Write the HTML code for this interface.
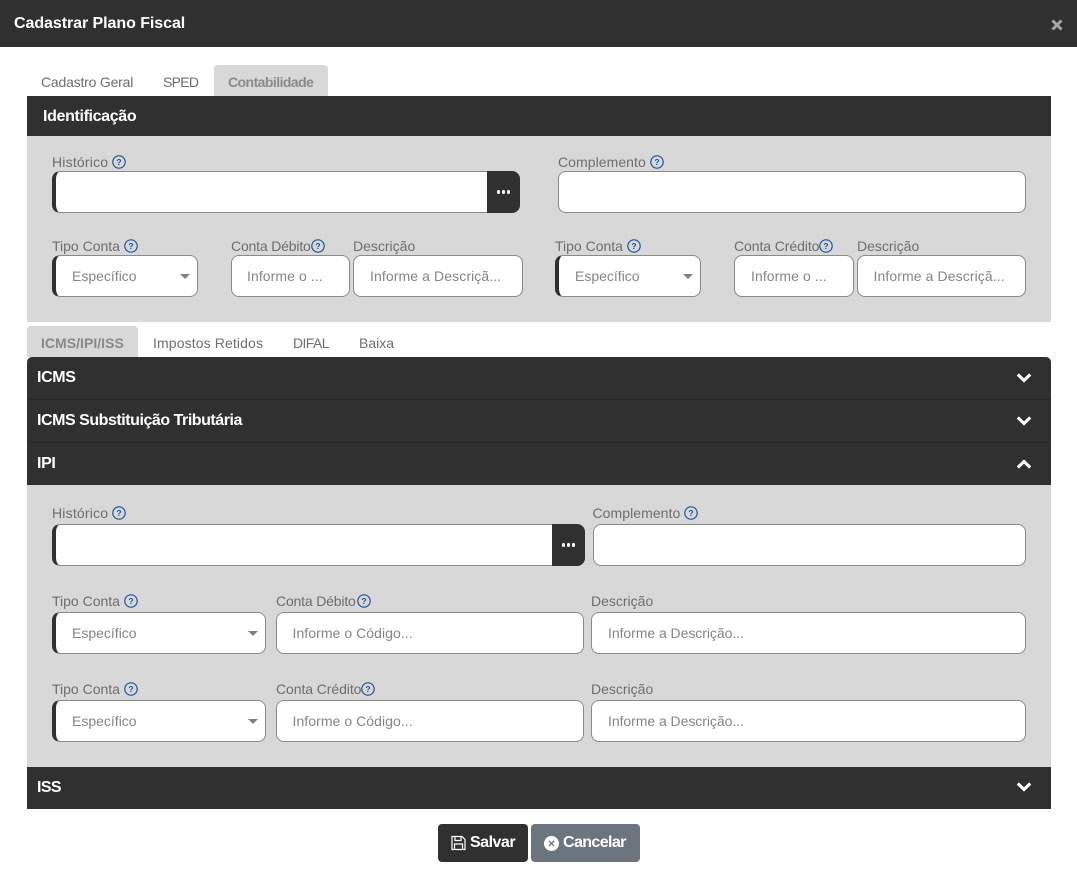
<!DOCTYPE html>
<html lang="pt-BR"><head><meta charset="utf-8"><title>Cadastrar Plano Fiscal</title>
<style>
html,body{margin:0;padding:0;background:#fff;}
body{width:1077px;height:885px;position:relative;overflow:hidden;font-family:"Liberation Sans",Arial,sans-serif;font-size:14px;color:#6b6b6b;}
div,span,svg{position:absolute;box-sizing:border-box;}
.t{white-space:nowrap;line-height:16px;}
.bar{background:#303030;}
.grey{background:#d8d8d8;}
.w{color:#fff;font-weight:bold;font-size:16px;white-space:nowrap;line-height:20px;letter-spacing:-.35px;}
.l{white-space:nowrap;line-height:16px;color:#6e6e6e;font-size:14px;}
.i{background:#fff;border:1px solid #8a8a8a;border-radius:8px;height:42px;}
.dk{border-left:4px solid #303030;}
.ph{white-space:nowrap;line-height:16px;color:#858585;font-size:14px;}
.tab{white-space:nowrap;line-height:16px;color:#6e6e6e;font-size:14px;}
.act{background:#d8d8d8;border-radius:4px 4px 0 0;}
.atx{white-space:nowrap;line-height:16px;color:#8a8a8a;font-size:14px;font-weight:bold;}
.car{width:0;height:0;border-left:5.5px solid transparent;border-right:5.5px solid transparent;border-top:5px solid #7f7f7f;}
.btn3{background:#303030;height:42px;width:33px;border-radius:0 8px 8px 0;}
.dot{width:3.6px;height:3.6px;border-radius:50%;background:#fff;top:19px;}
.sep{height:1px;background:#262626;left:27px;width:1024px;}
.hi{letter-spacing:.2px}.co{letter-spacing:.06px}.cd{letter-spacing:-.17px}.cc{letter-spacing:-.08px}
.p1{letter-spacing:.08px}.p2{letter-spacing:.1px}.p3{letter-spacing:.06px}.p4{letter-spacing:-.05px}
</style></head><body>

<div class="bar" style="left:0;top:0;width:1077px;height:47px"></div>
<div class="w" style="left:14px;top:14px;letter-spacing:-.06px">Cadastrar Plano Fiscal</div>
<svg style="left:1051px;top:19px" width="12" height="12" viewBox="0 0 12 12"><path d="M1.5 1.5L10.5 10.5M10.5 1.5L1.5 10.5" stroke="#a6a6a6" stroke-width="3"/></svg>

<div class="tab" style="left:41px;top:74px;letter-spacing:-.2px">Cadastro Geral</div>
<div class="tab" style="left:163px;top:74px;letter-spacing:-.7px">SPED</div>
<div class="act" style="left:214px;top:65px;width:114px;height:31px"></div>
<div class="atx" style="left:228px;top:74px;letter-spacing:-.55px">Contabilidade</div>

<div class="bar" style="left:27px;top:96px;width:1024px;height:40px"></div>
<div class="w" style="left:43px;top:107px">Identificação</div>
<div class="grey" style="left:27px;top:136px;width:1024px;height:186px"></div>

<div class="l hi" style="left:52px;top:154px">Histórico</div>
<svg style="left:112px;top:155px" width="14" height="14" viewBox="0 0 14 14"><circle cx="7" cy="7" r="6.2" fill="none" stroke="#1d5398" stroke-width="1.2"/><text x="7" y="10" text-anchor="middle" font-family="Liberation Sans" font-weight="bold" font-size="8.5" fill="#1d5398">?</text></svg>
<div class="i dk" style="left:52px;top:171px;width:468px"></div>
<div class="btn3" style="left:487px;top:171px"><span class="dot" style="left:9.5px"></span><span class="dot" style="left:14.5px"></span><span class="dot" style="left:19.5px"></span></div>

<div class="l co" style="left:558px;top:154px">Complemento</div>
<svg style="left:650px;top:155px" width="14" height="14" viewBox="0 0 14 14"><circle cx="7" cy="7" r="6.2" fill="none" stroke="#1d5398" stroke-width="1.2"/><text x="7" y="10" text-anchor="middle" font-family="Liberation Sans" font-weight="bold" font-size="8.5" fill="#1d5398">?</text></svg>
<div class="i" style="left:558px;top:171px;width:468px"></div>

<div class="l" style="left:52px;top:238px">Tipo Conta</div>
<svg style="left:124px;top:239px" width="14" height="14" viewBox="0 0 14 14"><circle cx="7" cy="7" r="6.2" fill="none" stroke="#1d5398" stroke-width="1.2"/><text x="7" y="10" text-anchor="middle" font-family="Liberation Sans" font-weight="bold" font-size="8.5" fill="#1d5398">?</text></svg>
<div class="i dk" style="left:52px;top:255px;width:146px"></div>
<div class="ph" style="left:72px;top:268px">Específico</div>
<div class="car" style="left:180px;top:274px"></div>

<div class="l cd" style="left:231px;top:238px">Conta Débito</div>
<svg style="left:311px;top:239px" width="14" height="14" viewBox="0 0 14 14"><circle cx="7" cy="7" r="6.2" fill="none" stroke="#1d5398" stroke-width="1.2"/><text x="7" y="10" text-anchor="middle" font-family="Liberation Sans" font-weight="bold" font-size="8.5" fill="#1d5398">?</text></svg>
<div class="i" style="left:231px;top:255px;width:119px"></div>
<div class="ph p1" style="left:247px;top:268px">Informe o ...</div>

<div class="l" style="left:353px;top:238px">Descrição</div>
<div class="i" style="left:353px;top:255px;width:170px"></div>
<div class="ph p2" style="left:370px;top:268px">Informe a Descriçã...</div>

<div class="l" style="left:555px;top:238px">Tipo Conta</div>
<svg style="left:627px;top:239px" width="14" height="14" viewBox="0 0 14 14"><circle cx="7" cy="7" r="6.2" fill="none" stroke="#1d5398" stroke-width="1.2"/><text x="7" y="10" text-anchor="middle" font-family="Liberation Sans" font-weight="bold" font-size="8.5" fill="#1d5398">?</text></svg>
<div class="i dk" style="left:555px;top:255px;width:146px"></div>
<div class="ph" style="left:575px;top:268px">Específico</div>
<div class="car" style="left:683px;top:274px"></div>

<div class="l cc" style="left:734px;top:238px">Conta Crédito</div>
<svg style="left:819px;top:239px" width="14" height="14" viewBox="0 0 14 14"><circle cx="7" cy="7" r="6.2" fill="none" stroke="#1d5398" stroke-width="1.2"/><text x="7" y="10" text-anchor="middle" font-family="Liberation Sans" font-weight="bold" font-size="8.5" fill="#1d5398">?</text></svg>
<div class="i" style="left:734px;top:255px;width:120px"></div>
<div class="ph p1" style="left:751px;top:268px">Informe o ...</div>

<div class="l" style="left:857px;top:238px">Descrição</div>
<div class="i" style="left:857px;top:255px;width:169px"></div>
<div class="ph p2" style="left:873.5px;top:268px">Informe a Descriçã...</div>

<div class="act" style="left:27px;top:326px;width:111px;height:31px"></div>
<div class="atx" style="left:41px;top:335px;letter-spacing:.03px">ICMS/IPI/ISS</div>
<div class="tab" style="left:153px;top:335px;letter-spacing:.12px">Impostos Retidos</div>
<div class="tab" style="left:293px;top:335px;letter-spacing:-.6px">DIFAL</div>
<div class="tab" style="left:359px;top:335px">Baixa</div>

<div class="bar" style="left:27px;top:357px;width:1024px;height:128px;border-radius:5px 5px 0 0"></div>
<div class="sep" style="top:399px"></div>
<div class="sep" style="top:442px"></div>
<div class="w" style="left:37px;top:368px">ICMS</div>
<div class="w" style="left:37px;top:411px;letter-spacing:-.46px">ICMS Substituição Tributária</div>
<div class="w" style="left:37px;top:454px">IPI</div>
<svg style="left:1016px;top:372px" width="16" height="11" viewBox="0 0 16 11"><path d="M1.8 2.5L8 8.5L14.2 2.5" fill="none" stroke="#fff" stroke-width="3"/></svg>
<svg style="left:1016px;top:415px" width="16" height="11" viewBox="0 0 16 11"><path d="M1.8 2.5L8 8.5L14.2 2.5" fill="none" stroke="#fff" stroke-width="3"/></svg>
<svg style="left:1016px;top:459px" width="16" height="11" viewBox="0 0 16 11"><path d="M1.8 8.5L8 2.5L14.2 8.5" fill="none" stroke="#fff" stroke-width="3"/></svg>

<div class="grey" style="left:27px;top:485px;width:1024px;height:282px"></div>

<div class="l hi" style="left:52px;top:505px">Histórico</div>
<svg style="left:112px;top:506px" width="14" height="14" viewBox="0 0 14 14"><circle cx="7" cy="7" r="6.2" fill="none" stroke="#1d5398" stroke-width="1.2"/><text x="7" y="10" text-anchor="middle" font-family="Liberation Sans" font-weight="bold" font-size="8.5" fill="#1d5398">?</text></svg>
<div class="i dk" style="left:52px;top:524px;width:533px"></div>
<div class="btn3" style="left:552px;top:524px"><span class="dot" style="left:9.5px"></span><span class="dot" style="left:14.5px"></span><span class="dot" style="left:19.5px"></span></div>

<div class="l co" style="left:592.5px;top:505px">Complemento</div>
<svg style="left:684px;top:506px" width="14" height="14" viewBox="0 0 14 14"><circle cx="7" cy="7" r="6.2" fill="none" stroke="#1d5398" stroke-width="1.2"/><text x="7" y="10" text-anchor="middle" font-family="Liberation Sans" font-weight="bold" font-size="8.5" fill="#1d5398">?</text></svg>
<div class="i" style="left:593px;top:524px;width:433px"></div>

<div class="l" style="left:52px;top:593px">Tipo Conta</div>
<svg style="left:124px;top:594px" width="14" height="14" viewBox="0 0 14 14"><circle cx="7" cy="7" r="6.2" fill="none" stroke="#1d5398" stroke-width="1.2"/><text x="7" y="10" text-anchor="middle" font-family="Liberation Sans" font-weight="bold" font-size="8.5" fill="#1d5398">?</text></svg>
<div class="i dk" style="left:52px;top:612px;width:214px"></div>
<div class="ph" style="left:72px;top:625px">Específico</div>
<div class="car" style="left:248px;top:631px"></div>

<div class="l cd" style="left:276px;top:593px">Conta Débito</div>
<svg style="left:357px;top:594px" width="14" height="14" viewBox="0 0 14 14"><circle cx="7" cy="7" r="6.2" fill="none" stroke="#1d5398" stroke-width="1.2"/><text x="7" y="10" text-anchor="middle" font-family="Liberation Sans" font-weight="bold" font-size="8.5" fill="#1d5398">?</text></svg>
<div class="i" style="left:276px;top:612px;width:308px"></div>
<div class="ph p3" style="left:292.5px;top:625px">Informe o Código...</div>

<div class="l" style="left:591px;top:593px">Descrição</div>
<div class="i" style="left:591px;top:612px;width:435px"></div>
<div class="ph p4" style="left:608px;top:625px">Informe a Descrição...</div>

<div class="l" style="left:52px;top:681px">Tipo Conta</div>
<svg style="left:124px;top:682px" width="14" height="14" viewBox="0 0 14 14"><circle cx="7" cy="7" r="6.2" fill="none" stroke="#1d5398" stroke-width="1.2"/><text x="7" y="10" text-anchor="middle" font-family="Liberation Sans" font-weight="bold" font-size="8.5" fill="#1d5398">?</text></svg>
<div class="i dk" style="left:52px;top:700px;width:214px"></div>
<div class="ph" style="left:72px;top:713px">Específico</div>
<div class="car" style="left:248px;top:719px"></div>

<div class="l cc" style="left:276px;top:681px">Conta Crédito</div>
<svg style="left:361px;top:682px" width="14" height="14" viewBox="0 0 14 14"><circle cx="7" cy="7" r="6.2" fill="none" stroke="#1d5398" stroke-width="1.2"/><text x="7" y="10" text-anchor="middle" font-family="Liberation Sans" font-weight="bold" font-size="8.5" fill="#1d5398">?</text></svg>
<div class="i" style="left:276px;top:700px;width:308px"></div>
<div class="ph p3" style="left:292.5px;top:713px">Informe o Código...</div>

<div class="l" style="left:591px;top:681px">Descrição</div>
<div class="i" style="left:591px;top:700px;width:435px"></div>
<div class="ph p4" style="left:608px;top:713px">Informe a Descrição...</div>

<div class="bar" style="left:27px;top:767px;width:1024px;height:42px"></div>
<div class="w" style="left:37px;top:778px;letter-spacing:-.6px">ISS</div>
<svg style="left:1016px;top:781px" width="16" height="11" viewBox="0 0 16 11"><path d="M1.8 2.5L8 8.5L14.2 2.5" fill="none" stroke="#fff" stroke-width="3"/></svg>

<div class="bar" style="left:438px;top:824px;width:90px;height:38px;border-radius:4px"></div>
<svg style="left:451px;top:835px" width="15" height="16" viewBox="0 0 15 16"><path d="M1 1.5H11L14 4.5V14.5H1ZM4 1.5V5.5H10V1.5M3.5 14.5V9H11.5V14.5" fill="none" stroke="#fff" stroke-width="1.2"/></svg>
<div class="w" style="left:470px;top:833px;letter-spacing:-.5px">Salvar</div>
<div style="left:531px;top:824px;width:109px;height:38px;border-radius:4px;background:#6c757d"></div>
<svg style="left:544px;top:836px" width="15" height="15" viewBox="0 0 15 15"><circle cx="7.5" cy="7.5" r="7.5" fill="#fff"/><path d="M5 5L10 10M10 5L5 10" stroke="#6c757d" stroke-width="1.3"/></svg>
<div class="w" style="left:563px;top:833px;letter-spacing:-.6px">Cancelar</div>
</body></html>
